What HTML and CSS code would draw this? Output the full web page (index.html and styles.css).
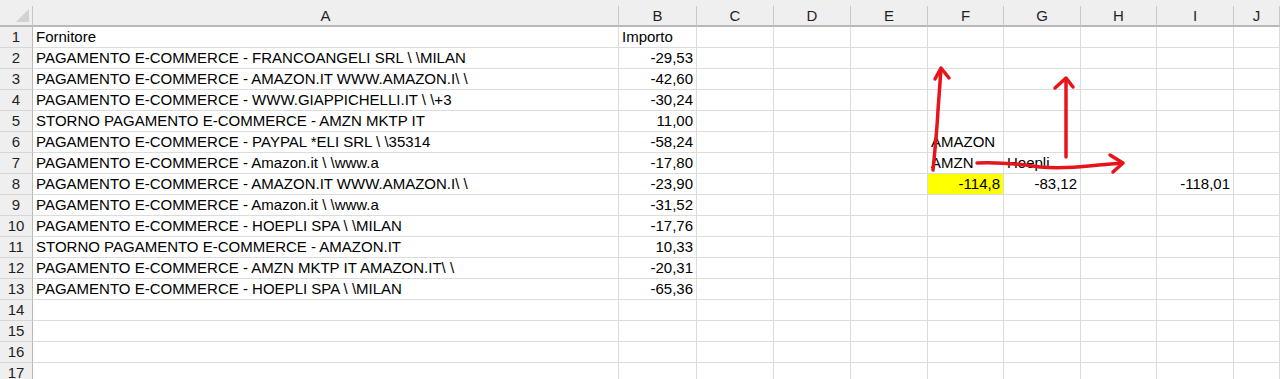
FILE: index.html
```html
<!DOCTYPE html>
<html lang="it">
<head>
    <meta charset="UTF-8">
    <meta name="viewport" content="width=device-width, initial-scale=1.0">
    <title>Fornitori</title>
    <link rel="stylesheet" href="styles.css">
</head>
<body>
    <div class="sheet-wrap">
        <div class="sheet" id="sheet"></div>

        <!-- Annotazioni a mano sopra il foglio -->
        <svg class="ink" width="1280" height="379" viewBox="0 0 1280 379">
            <g fill="none" stroke="#e8141c" stroke-width="3.5" stroke-linecap="round" stroke-linejoin="round">
                <path d="M933 170 C935 150 937 130 938 110 C939 95 940 82 941 69"/>
                <path d="M935 79 L941 68 L949 78"/>
                <path d="M1066 157 L1066 79"/>
                <path d="M1055 88 L1066 78 L1073 87"/>
                <path d="M977 163 C1000 162 1020 164 1040 167 C1065 169 1090 166 1122 163"/>
                <path d="M1110 155 L1123 163 L1113 172"/>
            </g>
        </svg>
    </div>

    <script>
        const columns = ['A', 'B', 'C', 'D', 'E', 'F', 'G', 'H', 'I', 'J'];

        // Contenuto delle celle: riga -> { colonna: [valore, tipo] }
        const cells = {
            1: { A: ['Fornitore'], B: ['Importo'] },
            2: { A: ['PAGAMENTO E-COMMERCE - FRANCOANGELI SRL \\ \\MILAN'], B: ['-29,53', 'num'] },
            3: { A: ['PAGAMENTO E-COMMERCE - AMAZON.IT WWW.AMAZON.I\\ \\'], B: ['-42,60', 'num'] },
            4: { A: ['PAGAMENTO E-COMMERCE - WWW.GIAPPICHELLI.IT \\ \\+3'], B: ['-30,24', 'num'] },
            5: { A: ['STORNO PAGAMENTO E-COMMERCE - AMZN MKTP IT'], B: ['11,00', 'num'] },
            6: { A: ['PAGAMENTO E-COMMERCE - PAYPAL *ELI SRL \\ \\35314'], B: ['-58,24', 'num'], F: ['AMAZON'] },
            7: { A: ['PAGAMENTO E-COMMERCE - Amazon.it \\ \\www.a'], B: ['-17,80', 'num'], F: ['AMZN'], G: ['Hoepli'] },
            8: { A: ['PAGAMENTO E-COMMERCE - AMAZON.IT WWW.AMAZON.I\\ \\'], B: ['-23,90', 'num'],
                 F: ['-114,8', 'num mark'], G: ['-83,12', 'num'], I: ['-118,01', 'num'] },
            9: { A: ['PAGAMENTO E-COMMERCE - Amazon.it \\ \\www.a'], B: ['-31,52', 'num'] },
            10: { A: ['PAGAMENTO E-COMMERCE - HOEPLI SPA \\ \\MILAN'], B: ['-17,76', 'num'] },
            11: { A: ['STORNO PAGAMENTO E-COMMERCE - AMAZON.IT'], B: ['10,33', 'num'] },
            12: { A: ['PAGAMENTO E-COMMERCE - AMZN MKTP IT AMAZON.IT\\ \\'], B: ['-20,31', 'num'] },
            13: { A: ['PAGAMENTO E-COMMERCE - HOEPLI SPA \\ \\MILAN'], B: ['-65,36', 'num'] }
        };

        function addCell(sheet, className, text) {
            const div = document.createElement('div');
            div.className = className;
            div.textContent = text || '';
            sheet.appendChild(div);
        }

        function buildSheet() {
            const sheet = document.getElementById('sheet');

            // Intestazioni colonne
            addCell(sheet, 'corner');
            columns.forEach(col => addCell(sheet, 'col-head', col));

            // Righe
            for (let r = 1; r <= 17; r++) {
                addCell(sheet, 'row-head', r);
                columns.forEach(col => {
                    const data = (cells[r] || {})[col];
                    if (data) {
                        addCell(sheet, 'cell ' + (data[1] || ''), data[0]);
                    } else {
                        addCell(sheet, 'cell');
                    }
                });
            }
        }

        buildSheet();
    </script>
</body>
</html>
```

FILE: styles.css
```css
body {
    margin: 0;
    font-family: "Liberation Sans", Arial, sans-serif;
    font-size: 15px;
    color: #000;
    background-color: #fff;
    overflow: hidden;
}

.sheet-wrap {
    position: relative;
    width: 1280px;
    height: 379px;
    overflow: hidden;
}

.sheet {
    display: grid;
    grid-template-columns: 33px 586px 78px 77px 77px 77px 76px 77px 76px 77px 1fr;
    grid-template-rows: 27px;
    grid-auto-rows: 21px;
    background-color: #efefef;
}

/* Angolo in alto a sinistra */
.corner {
    position: relative;
    border-right: 1px solid #c6c6c6;
    border-bottom: 2px solid #b9b9b9;
    margin-top: 6px;
}

.corner::after {
    content: "";
    position: absolute;
    right: 3px;
    bottom: 3px;
    border-style: solid;
    border-width: 0 0 13px 13px;
    border-color: transparent transparent #d2d2d2 transparent;
}

.col-head {
    margin-top: 6px;
    border-right: 1px solid #c9c9c9;
    border-bottom: 2px solid #b9b9b9;
    text-align: center;
    line-height: 19px;
    color: #1f1f1f;
}

.row-head {
    border-right: 1px solid #b9b9b9;
    border-bottom: 1px solid #d6d6d6;
    text-align: center;
    line-height: 20px;
    color: #1f1f1f;
}

.cell {
    background-color: #fff;
    border-right: 1px solid #dcdcdc;
    border-bottom: 1px solid #dcdcdc;
    padding: 0 3px;
    line-height: 20px;
    white-space: nowrap;
    overflow: visible;
}

.cell.num {
    text-align: right;
}

.cell.mark {
    background-color: #ffff00;
}

.ink {
    position: absolute;
    left: 0;
    top: 0;
    pointer-events: none;
}
```
